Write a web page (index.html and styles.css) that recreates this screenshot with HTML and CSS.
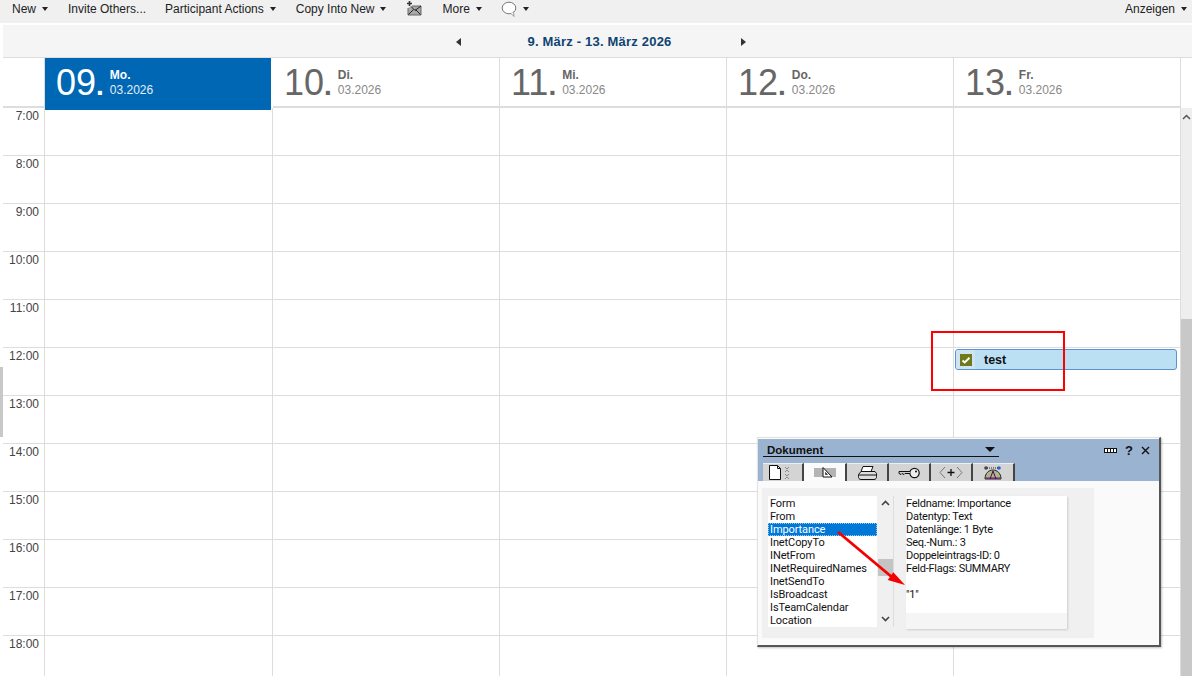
FILE: index.html
```html
<!DOCTYPE html>
<html lang="de">
<head>
<meta charset="utf-8">
<title>Kalender</title>
<link rel="stylesheet" href="styles.css">
</head>
<body>
<div class="toolbar">
  <div class="tool t-new">New<i class="caret"></i></div>
  <div class="tool t-invite">Invite Others...</div>
  <div class="tool t-part">Participant Actions<i class="caret"></i></div>
  <div class="tool t-copy">Copy Into New<i class="caret"></i></div>
  <svg class="mailicon" width="16" height="16" viewBox="0 0 16 16"><path d="M3.500 1v5M1 3.500h5" stroke="#333" stroke-width="1.600"/><path d="M6 6h9v9H2V8" fill="#a8a8a8" stroke="#666"/><path d="M2.500 14.500l5-5M14.500 14.500l-5-5M5 6.500l4 4 6-4.500" fill="none" stroke="#222"/></svg>
  <div class="tool t-more">More<i class="caret"></i></div>
  <svg class="bubble" width="16" height="16" viewBox="0 0 16 16"><ellipse cx="8" cy="7" rx="6.800" ry="5.800" fill="#fff" stroke="#777"/><path d="M10 12.500l3 3-.5-4.500" fill="#fff" stroke="#999"/></svg>
  <i class="caret c-bubble"></i>
  <div class="tool t-show">Anzeigen<i class="caret"></i></div>
</div>
<div class="main">
  <div class="navbar">
    <i class="nav-l"></i>
    <span class="range">9. März - 13. März 2026</span>
    <i class="nav-r"></i>
  </div>
  <div class="head">
    <div class="corner"></div>
    <div class="day today"><span class="num">09<b>.</b></span><span class="meta"><b>Mo.</b><span>03.2026</span></span></div>
    <div class="day"><span class="num">10<b>.</b></span><span class="meta"><b>Di.</b><span>03.2026</span></span></div>
    <div class="day"><span class="num">11<b>.</b></span><span class="meta"><b>Mi.</b><span>03.2026</span></span></div>
    <div class="day"><span class="num">12<b>.</b></span><span class="meta"><b>Do.</b><span>03.2026</span></span></div>
    <div class="day"><span class="num">13<b>.</b></span><span class="meta"><b>Fr.</b><span>03.2026</span></span></div>
  </div>
  <div class="body">
    <div class="grid">
      <div class="hour">7:00</div><div class="c"></div><div class="c"></div><div class="c"></div><div class="c"></div><div class="c"></div>
      <div class="hour">8:00</div><div class="c"></div><div class="c"></div><div class="c"></div><div class="c"></div><div class="c"></div>
      <div class="hour">9:00</div><div class="c"></div><div class="c"></div><div class="c"></div><div class="c"></div><div class="c"></div>
      <div class="hour">10:00</div><div class="c"></div><div class="c"></div><div class="c"></div><div class="c"></div><div class="c"></div>
      <div class="hour">11:00</div><div class="c"></div><div class="c"></div><div class="c"></div><div class="c"></div><div class="c"></div>
      <div class="hour">12:00</div><div class="c"></div><div class="c"></div><div class="c"></div><div class="c"></div>
      <div class="c"><div class="event"><span class="check"><svg width="12" height="12" viewBox="0 0 12 12"><rect width="12" height="12" fill="#6f7a1c"/><path d="M2.500 6.500l2.200 2L9.500 3.800" fill="none" stroke="#fff" stroke-width="2"/></svg></span><b>test</b></div></div>
      <div class="hour">13:00</div><div class="c"></div><div class="c"></div><div class="c"></div><div class="c"></div><div class="c"></div>
      <div class="hour">14:00</div><div class="c"></div><div class="c"></div><div class="c"></div><div class="c"></div><div class="c"></div>
      <div class="hour">15:00</div><div class="c"></div><div class="c"></div><div class="c"></div><div class="c"></div><div class="c"></div>
      <div class="hour">16:00</div><div class="c"></div><div class="c"></div><div class="c"></div><div class="c"></div><div class="c"></div>
      <div class="hour">17:00</div><div class="c"></div><div class="c"></div><div class="c"></div><div class="c"></div><div class="c"></div>
      <div class="hour">18:00</div><div class="c"></div><div class="c"></div><div class="c"></div><div class="c"></div><div class="c"></div>
    </div>
    <div class="scroll">
      <svg class="sc-up" width="9" height="6" viewBox="0 0 9 6"><path d="M1 5l3.500-3.500L8 5" fill="none" stroke="#555" stroke-width="1.500"/></svg>
      <div class="sc-thumb"></div>
    </div>
  </div>
</div>
<div class="handle"></div>
<div class="redbox"></div>
<div class="dialog">
  <div class="d-title">
    <div class="d-row">
      <div class="d-select"><b>Dokument</b><i></i></div>
      <div class="d-btns">
        <svg width="13" height="5" viewBox="0 0 13 5"><rect x=".5" y=".5" width="12" height="4" fill="#fff" stroke="#111"/><path d="M3.500 0v5M6.500 0v5M9.500 0v5" stroke="#111"/></svg>
        <b>?</b>
        <svg width="9" height="9" viewBox="0 0 9 9"><path d="M1 1l7 7M8 1L1 8" stroke="#111" stroke-width="1.400"/></svg>
      </div>
    </div>
    <div class="tabs">
      <div class="tab t1"><svg width="27" height="15" viewBox="0 0 27 15"><path d="M1.500 .5h8l3 3v11h-11z" fill="#fff" stroke="#111"/><path d="M9.500 .5v3h3" fill="none" stroke="#111"/><path d="M17 2l2 2 2-2M17 7l2-2 2 2M17 9l2 2 2-2M17 14l2-2 2 2" fill="none" stroke="#888"/></svg></div>
      <div class="tab t2 on"><svg width="22" height="11" viewBox="0 0 22 11"><rect y="1" width="22" height="9" fill="#b4b4b4"/><path d="M9 .5l9 9.500H9z" fill="#fff" stroke="#111"/><path d="M11.500 7.500v-2l2 2z" fill="#b4b4b4" stroke="#111" stroke-width=".7"/></svg></div>
      <div class="tab"><svg width="19" height="14" viewBox="0 0 19 14"><path d="M5 .5h10l-2 5H3z" fill="#fff" stroke="#111"/><path d="M3 5.500h14l1.500 2v3a2.500 2.500 0 0 1-2.500 3H3a2.500 2.500 0 0 1-2.500-3v-2z" fill="#ddd" stroke="#111"/><path d="M1 9h17" stroke="#111"/></svg></div>
      <div class="tab"><svg width="22" height="12" viewBox="0 0 22 12"><circle cx="16.500" cy="6" r="4.700" fill="#eee" stroke="#111" stroke-width="1.200"/><circle cx="18" cy="4.500" r="1" fill="#111"/><path d="M12 4.500H1v2l2 1 1-1 2 1 1-1h5" fill="#ccc" stroke="#111"/></svg></div>
      <div class="tab"><svg width="24" height="13" viewBox="0 0 24 13"><path d="M6 1L1 6.500 6 12M18 1l5 5.500L18 12" fill="none" stroke="#777"/><path d="M12 3v7M8.500 6.500h7" stroke="#111" stroke-width="1.300"/></svg></div>
      <div class="tab last"><svg width="20" height="14" viewBox="0 0 20 14"><path d="M2 13C2 7 6 4 10 4s8 3 8 9z" fill="#a9b98c" stroke="#222"/><path d="M3 12h14" stroke="#800080"/><path d="M10 5l-3 8M10 5l3 8" stroke="#505"/><circle cx="3" cy="2" r="1.800" fill="#445"/><circle cx="16" cy="2" r="1.800" fill="#26c"/><path d="M4 2h11" stroke="#222" stroke-dasharray="1 1"/></svg></div>
    </div>
  </div>
  <div class="d-body">
    <div class="panel">
      <div class="listwrap">
        <ul class="list">
          <li>Form</li><li>From</li><li class="sel">Importance</li><li>InetCopyTo</li><li>INetFrom</li><li>INetRequiredNames</li><li>InetSendTo</li><li>IsBroadcast</li><li>IsTeamCalendar</li><li>Location</li>
        </ul>
        <div class="l-scroll">
          <svg width="9" height="6" viewBox="0 0 9 6"><path d="M1 5l3.500-3.500L8 5" fill="none" stroke="#444" stroke-width="1.600"/></svg>
          <div class="l-thumb"></div>
          <svg width="9" height="6" viewBox="0 0 9 6"><path d="M1 1l3.500 3.500L8 1" fill="none" stroke="#444" stroke-width="1.600"/></svg>
        </div>
      </div>
      <div class="info">
        <div class="info-text">Feldname: Importance<br>Datentyp: Text<br>Datenlänge: 1 Byte<br>Seq.-Num.: 3<br>Doppeleintrags-ID: 0<br>Feld-Flags: SUMMARY<br><br>"1"</div>
        <div class="info-foot"></div>
      </div>
    </div>
  </div>
</div>
<svg class="arrow" width="80" height="70" viewBox="0 0 80 70"><path d="M1 1L56 47" stroke="#f40000" stroke-width="2.800"/><path d="M68 54L50.700 49 56.300 41.300z" fill="#f40000"/></svg>
</body>
</html>
```
FILE: styles.css
```css
* { box-sizing: border-box; }
html, body { margin: 0; height: 676px; overflow: hidden; }
body { position: relative; background: #fff; font: 12px "Liberation Sans", Arial, sans-serif; color: #333; }
i { font-style: normal; display: block; }

.toolbar { height: 23px; background: #f0f0f0; display: flex; align-items: center; color: #222; padding-bottom: 6px; }
.tool { display: flex; align-items: center; white-space: nowrap; }
.caret { width: 0; height: 0; border: 3px solid transparent; border-top: 4px solid #222; border-bottom: 0; margin-left: 6px; }
.t-new { margin-left: 12px; }
.t-invite { margin-left: 20px; }
.t-part { margin-left: 19px; }
.t-copy { margin-left: 20px; }
.mailicon { margin-left: 20px; margin-top: -1px; }
.t-more { margin-left: 20px; }
.bubble { margin-left: 19px; margin-top: 1px; }
.c-bubble { margin-left: 6px; }
.t-show { margin-left: auto; margin-right: 5px; }

.main { margin: 2px 0 0 3px; }
.navbar { height: 33px; background: #f5f5f5; border-bottom: 1px solid #ddd; display: flex; align-items: center; justify-content: center; padding: 1px 0 0 7px; }
.range { color: #0f4472; font-weight: bold; font-size: 13px; letter-spacing: .2px; margin: 0 69px 0 66px; }
.nav-l, .nav-r { width: 0; height: 0; border: 4px solid transparent; }
.nav-l { border-right: 5px solid #333; border-left: 0; }
.nav-r { border-left: 5px solid #333; border-right: 0; }

.head { height: 50px; display: grid; grid-template-columns: 42px 228px 227px 227px 227px 227px; border-bottom: 2px solid #ddd; margin-right: 11px; }
.corner { border-right: 1px solid #ddd; }
.day { display: flex; border-right: 1px solid #ddd; color: #666; padding: 0 0 0 11px; position: relative; }
.day.today { background: #0067b5; color: #fff; border-right: 2px solid #fff; margin-bottom: 1px; background-clip: padding-box; }
.num { font-size: 36px; line-height: 48px; padding-top: 1px; }
.num b { font-size: 28px; }
.meta { display: flex; flex-direction: column; margin-left: 6px; padding-top: 10px; line-height: 15px; }
.meta b { font-size: 12px; }
.meta span { color: #888; }
.today .meta span { color: #e4eef7; }

.body { display: flex; }
.grid { width: 1178px; display: grid; grid-template-columns: 42px 228px 227px 227px 227px 227px; grid-auto-rows: 48px; height: 569px; overflow: hidden; }
.hour { border-right: 1px solid #ddd; border-bottom: 1px solid #ddd; text-align: right; padding: 1px 5px 0 0; color: #444; line-height: 15px; }
.c { border-right: 1px solid #ddd; border-bottom: 1px solid #ddd; position: relative; }
.scroll { width: 11px; background: #eee; display: flex; flex-direction: column; align-items: center; padding-top: 6px; position: relative; }
.sc-thumb { position: absolute; top: 211px; left: 0; right: 0; bottom: 0; background: #c8c8c8; }

.event { position: absolute; left: 1px; right: 3px; top: 1px; height: 21px; background: #bce0f3; border: 1px solid #5a93cf; border-radius: 3px; display: flex; align-items: center; color: #111; overflow: hidden; }
.check { width: 19px; height: 19px; background: #cfe4f0; display: flex; align-items: center; justify-content: center; margin-right: 9px; padding-top: 1px; }
.event b { font-size: 12.500px; }

.handle { position: absolute; left: 0; top: 367px; width: 3px; height: 70px; background: #c8c8c8; }
.redbox { position: absolute; left: 931px; top: 331px; width: 134px; height: 60px; border: 2px solid #f00; }

.dialog { position: absolute; left: 757px; top: 437px; width: 404px; height: 210px; background: #fafafa; border: 1px solid #e2e2e2; border-right: 2px solid #555; border-bottom: 2px solid #555; box-shadow: 1px 1px 2px rgba(0,0,0,.25); color: #111; }
.d-title { height: 43px; background: #9ab3d1; display: flex; flex-direction: column; padding: 4px 0 0 5px; border-top: 1px solid #fafafa; }
.d-row { display: flex; justify-content: space-between; height: 16px; padding-right: 9px; }
.d-select { width: 236px; height: 14px; border-bottom: 1px solid #111; display: flex; justify-content: space-between; align-items: center; padding: 0 3px 0 4px; }
.d-select b { font-size: 11.500px; }
.d-select i { border: 5px solid transparent; border-top: 5px solid #111; border-bottom: 0; margin-right: 1px; }
.d-btns { display: flex; align-items: center; gap: 8px; padding-bottom: 2px; }
.d-btns b { font-size: 13px; }
.tabs { display: flex; margin-top: 4px; height: 18px; }
.tab { width: 42px; background: #d4d4d4; border-top: 1px solid #eee; border-right: 2px solid #444; display: flex; align-items: center; justify-content: center; }
.tab.t1 { width: 41px; padding-right: 2px; }
.tab.t2 { width: 43px; }
.tab.on { background: #fafafa; border-top-color: #fff; }
.d-body { padding: 7px 0 0 4px; }
.panel { width: 332px; height: 150px; background: #f0f0f0; padding: 8px 0 0 6px; display: flex; }
.listwrap { width: 126px; height: 131px; display: flex; border-right: 1px solid #ddd; }
.list { list-style: none; margin: 0; padding: 1px 0 0; width: 109px; height: 131px; background: #fff; font: 11px/13px Roboto, "Liberation Sans", sans-serif; letter-spacing: -.1px; overflow: hidden; }
.list li { padding-left: 2px; height: 13px; }
.list .sel { background: #0078d7; color: #fff; outline: 1px dotted #9cc8ee; outline-offset: -1px; }
.l-scroll { flex: 1; display: flex; flex-direction: column; align-items: center; position: relative; padding: 4px 0 5px; justify-content: space-between; }
.l-thumb { position: absolute; left: 1px; right: 0; top: 63px; height: 17px; background: #c4c4c4; }
.info { width: 161px; height: 133px; margin-left: 12px; background: #fff; box-shadow: 1px 1px 2px #ccc; display: flex; flex-direction: column; justify-content: space-between; }
.info-text { font: 11px/13px Roboto, "Liberation Sans", sans-serif; letter-spacing: -.25px; padding-top: 1px; }
.info-foot { height: 16px; background: #f5f5f5; }

.arrow { position: absolute; left: 837px; top: 531px; }
```
